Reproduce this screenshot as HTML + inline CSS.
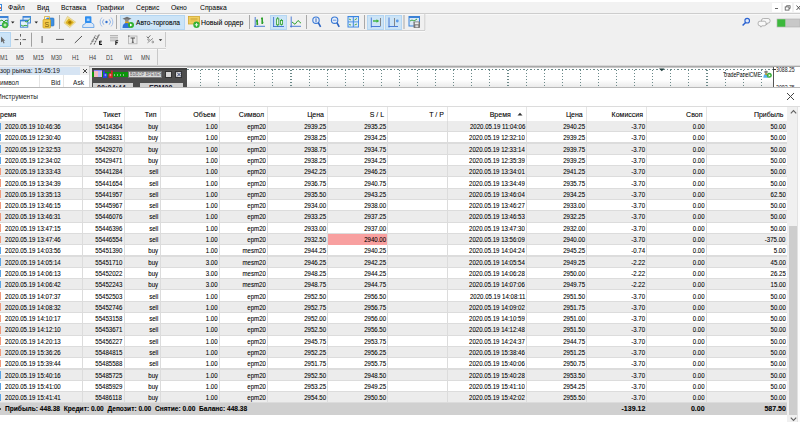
<!DOCTYPE html>
<html><head><meta charset="utf-8"><style>
*{margin:0;padding:0;box-sizing:border-box}
html,body{width:800px;height:422px;overflow:hidden;background:#f0f0f0;font-family:"Liberation Sans",sans-serif;color:#1a1a1a;position:relative}
div{position:absolute}
.t{white-space:nowrap;font-size:7.5px;line-height:10px}
/* menubar */
.menubar{left:0;top:0;width:800px;height:13.6px;background:#f2f2f2;border-bottom:1px solid #cdcdcd}
.mi{top:3px;font-size:8px;line-height:10px;color:#000;white-space:nowrap;transform:scaleX(0.85);transform-origin:0 0}
.sx{transform:scaleX(0.82);transform-origin:0 0}
.wbtn{top:3px;width:10px;height:10px;background:#fff}
/* toolbars */
.tsep{width:1px;background:#a0a0a0}
.hl{background:#cce4f7;border:1px solid #b4d6f2}
.tf{top:52.5px;font-size:7px;line-height:10px;color:#3a3a3a;white-space:nowrap;transform:scaleX(0.8);transform-origin:0 0}
/* terminal */
.term{left:0;top:87px;width:800px;height:335px;background:#fff;border-top:1.2px solid #b8b8b8}
.ht{top:108.8px;font-size:7px;line-height:12px;color:#000;white-space:nowrap;-webkit-text-stroke:0.15px rgba(0,0,0,0.6)}
.hsep{top:107px;width:1px;height:14px;background:#e5e5e5}
.row{left:0;width:787px;height:11.3px}
.rg{background:#ececec}
.rw{background:#ffffff}
.csep{top:121px;width:1px;height:282.5px;background:#dcdcdc}
.ic{left:0;width:1.2px;height:7.5px}
.ib{background:#5aa4e6}
.is{background:#f29a7c}
.c{height:11.3px;font-size:7.5px;line-height:11.3px;white-space:nowrap;color:#000;-webkit-text-stroke:0.15px rgba(0,0,0,0.6);transform:scaleX(0.81);transform-origin:0 0}
.cr{transform-origin:100% 0}
.cr{text-align:right}
.pink{left:328px;width:59.5px;height:11.25px;background:#f8a0a0}
.sum{left:0;width:787px;height:11.5px;background:#d0d0d0}
.sb{font-weight:bold;line-height:11.3px}
.sbl{transform:scaleX(0.88)}

.hl2{left:0;width:787px;height:1.2px;background:#dcdcdc}

</style></head><body>
<div class="menubar"></div>
<div style="left:0;top:0;width:800px;height:2px;background:#fff"></div>
<div style="left:-1px;top:3.8px;width:3px;height:7.7px;background:#fff;border:0.8px solid #3a8ae0"></div>
<div style="left:0;top:7.3px;width:1.2px;height:1.5px;background:#f07040"></div>
<div class="mi" style="left:8px">Файл</div>
<div class="mi" style="left:36.6px">Вид</div>
<div class="mi" style="left:61px">Вставка</div>
<div class="mi" style="left:97px">Графики</div>
<div class="mi" style="left:136px">Сервис</div>
<div class="mi" style="left:171px">Окно</div>
<div class="mi" style="left:199.8px">Справка</div>
<div class="wbtn" style="left:772px;width:9px;height:9px"></div>
<div class="wbtn" style="left:783px;width:9px;height:9px"></div>
<div class="wbtn" style="left:794px;width:9px;height:9px"></div>
<div style="left:774.6px;top:8.2px;width:3.4px;height:1.2px;background:#666"></div>
<svg style="position:absolute;left:784px;top:4.5px" width="8" height="6" viewBox="0 0 8 6"><path d="M2.6 1.8 V0.6 H6.2 V3.4 H5" fill="none" stroke="#555" stroke-width="0.7"/><rect x="1.2" y="1.9" width="3.8" height="3.2" fill="none" stroke="#555" stroke-width="0.8"/></svg>
<svg style="position:absolute;left:796px;top:4.5px" width="4" height="6" viewBox="0 0 4 6"><path d="M0.5 0.5 L4.5 5 M4.5 0.5 L0.5 5" stroke="#444" stroke-width="0.9"/></svg>
<!-- toolbar 1 -->
<div style="left:0;top:13.6px;width:800px;height:1px;background:#f8f8f8"></div>
<div class="hl" style="left:119.5px;top:15px;width:65px;height:14.5px"></div>
<div class="t" style="left:136px;top:18.2px;font-size:8px;color:#000;-webkit-text-stroke:0.15px rgba(0,0,0,0.5);transform:scaleX(0.83);transform-origin:0 0">Авто-торговла</div>
<div class="t" style="left:201.3px;top:18.2px;font-size:8px;color:#000;-webkit-text-stroke:0.15px rgba(0,0,0,0.5);transform:scaleX(0.86);transform-origin:0 0">Новый ордер</div>
<div class="hl" style="left:269.5px;top:15px;width:17.5px;height:14.5px"></div>
<div class="hl" style="left:367px;top:15px;width:17px;height:14.5px"></div>
<div class="hl" style="left:385.3px;top:15px;width:16.7px;height:14.5px"></div>
<div style="left:0;top:30px;width:425px;height:1px;background:#d0d0d0"></div>
<div style="left:0;top:31px;width:425px;height:1px;background:#fafafa"></div>
<!-- toolbar 2 -->
<div class="hl" style="left:-1px;top:32.2px;width:12px;height:14.5px"></div>
<div style="left:165px;top:32px;width:1px;height:15px;background:#c8c8c8"></div>
<div style="left:0;top:48px;width:166px;height:1px;background:#d0d0d0"></div>
<div style="left:0;top:49px;width:166px;height:1px;background:#fafafa"></div>
<div class="tf" style="left:0">M1</div>
<div class="tf" style="left:16px">M5</div>
<div class="tf" style="left:33px">M15</div>
<div class="tf" style="left:51px">M30</div>
<div class="tf" style="left:71.5px">H1</div>
<div class="tf" style="left:88.5px">H4</div>
<div class="tf" style="left:106px">D1</div>
<div class="tf" style="left:124px">W1</div>
<div class="tf" style="left:141px">MN</div>
<div style="left:157px;top:49px;width:1px;height:16px;background:#c8c8c8"></div>
<div style="left:0;top:65px;width:89px;height:1px;background:#d8d8d8"></div>
<!-- market watch -->
<div style="left:0;top:66.5px;width:80px;height:8px;background:#d6e4f3"></div>
<div class="t sx" style="left:0;top:65.5px;font-size:8px">зор рынка: 15:45:19</div>
<svg style="position:absolute;left:81.5px;top:67.8px" width="6" height="6" viewBox="0 0 6 6"><path d="M1 1 L5 5 M5 1 L1 5" stroke="#333" stroke-width="0.9"/></svg>
<div style="left:0;top:75px;width:88.5px;height:12.5px;background:#fff"></div>
<div class="t sx" style="left:0;top:78px;font-size:8px">имвол</div>
<div class="t sx" style="left:50.5px;top:78px;font-size:8px">Bid</div>
<div class="t sx" style="left:73px;top:78px;font-size:8px">Ask</div>
<div style="left:39.3px;top:75px;width:1px;height:12.5px;background:#e5e5e5"></div>
<div style="left:63px;top:75px;width:1px;height:12.5px;background:#e5e5e5"></div>
<div style="left:88.5px;top:66px;width:1px;height:22px;background:#d0d0d0"></div>
<!-- chart window -->
<div style="left:89px;top:64.8px;width:711px;height:1.2px;background:#d8d8d8"></div>
<div style="left:89px;top:65.8px;width:711px;height:1.4px;background:#a9a9a9"></div>
<div style="left:89.5px;top:67px;width:2px;height:21px;background:#e6e6e6"></div>
<div style="left:91.5px;top:67.5px;width:95.5px;height:20.5px;background:#4d4d4d"></div>
<div style="left:91.5px;top:67.5px;width:95.5px;height:2.5px;background:#3f3f3f"></div>
<div style="left:92px;top:71.8px;width:36px;height:5.6px;background:#0a960a"></div>
<div style="left:94px;top:70px;width:7.5px;height:7px;background:#f0b8c0"></div>
<div style="left:97.8px;top:70px;width:3.7px;height:7px;background:#b8b8f8"></div>
<div style="left:94px;top:70px;width:7.5px;height:1px;background:#8080f0"></div>
<svg style="position:absolute;left:102px;top:70px" width="12" height="8" viewBox="0 0 12 8"><path d="M1 0.5 h1.8 v2.5 h1 q1.6 0 1.6 1.8 v1.6 q0 1.6 -1.6 1.6 h-2.8z" fill="#2a3ae0"/><rect x="2.6" y="4" width="1.6" height="2.2" fill="#8c94f0"/><path d="M10.8 0.5 h-1.8 v2.5 h-1 q-1.6 0 -1.6 1.8 v1.6 q0 1.6 1.6 1.6 h2.8z" fill="#d02828"/><rect x="7.6" y="4" width="1.6" height="2.2" fill="#f09090"/></svg>
<div style="left:114px;top:73.5px;width:12px;height:2px;background:repeating-linear-gradient(90deg,#8ab88a 0 1px,transparent 1px 3px)"></div>
<div style="left:128px;top:71px;width:33.5px;height:7px;background:#dadada;border:1px solid #777"></div>
<div class="t" style="left:129.5px;top:70.5px;font-size:4.6px;line-height:8px;color:#606060;letter-spacing:0.35px;transform:scaleX(0.78);transform-origin:0 0">ВЫБОР ВРЕМЕНИ</div>
<div style="left:164.7px;top:71px;width:7.3px;height:7px;background:#d8d8d8;border:1px solid #333"></div>
<div style="left:174.8px;top:71px;width:7.7px;height:7px;background:#d8d8d8;border:1px solid #333"></div>
<svg style="position:absolute;left:175px;top:71px" width="8" height="7" viewBox="0 0 8 7"><path d="M2 1.5 L6 5.5 M6 1.5 L2 5.5" stroke="#3a4a7a" stroke-width="1"/></svg>
<div style="left:92.5px;top:82.5px;width:40.5px;height:5.5px;background:#d2d2d2"></div>
<div style="left:139.8px;top:82.5px;width:43px;height:5.5px;background:#d2d2d2"></div>
<div class="t" style="left:97.4px;top:83.3px;font-size:9px;line-height:10px;color:#223;font-weight:bold;transform:scaleX(0.8);transform-origin:0 0">00:04:44</div>
<div class="t" style="left:149px;top:83.3px;font-size:9px;line-height:10px;color:#223;font-weight:bold;transform:scaleX(0.8);transform-origin:0 0">EPM20</div>
<div style="left:187px;top:67.2px;width:586px;height:20.8px;background:linear-gradient(180deg,#fff 0,#fff 60%,#e8e8e8 100%)"></div>
<div style="left:187px;top:67.2px;width:613px;height:0.8px;background:#c8c8c8"></div>
<div style="left:187px;top:68.5px;width:586px;height:1.2px;background:repeating-linear-gradient(90deg,#6a8888 0 1.5px,transparent 1.5px 3.5px)"></div>
<div style="left:200.00px;top:69.5px;width:1.1px;height:18.5px;background:repeating-linear-gradient(180deg,#6a8888 0 1.3px,transparent 1.3px 3px)"></div><div style="left:218.09px;top:69.5px;width:1.1px;height:18.5px;background:repeating-linear-gradient(180deg,#6a8888 0 1.3px,transparent 1.3px 3px)"></div><div style="left:236.17px;top:69.5px;width:1.1px;height:18.5px;background:repeating-linear-gradient(180deg,#6a8888 0 1.3px,transparent 1.3px 3px)"></div><div style="left:254.26px;top:69.5px;width:1.1px;height:18.5px;background:repeating-linear-gradient(180deg,#6a8888 0 1.3px,transparent 1.3px 3px)"></div><div style="left:272.35px;top:69.5px;width:1.1px;height:18.5px;background:repeating-linear-gradient(180deg,#6a8888 0 1.3px,transparent 1.3px 3px)"></div><div style="left:290.44px;top:69.5px;width:1.1px;height:18.5px;background:repeating-linear-gradient(180deg,#6a8888 0 1.3px,transparent 1.3px 3px)"></div><div style="left:308.52px;top:69.5px;width:1.1px;height:18.5px;background:repeating-linear-gradient(180deg,#6a8888 0 1.3px,transparent 1.3px 3px)"></div><div style="left:326.61px;top:69.5px;width:1.1px;height:18.5px;background:repeating-linear-gradient(180deg,#6a8888 0 1.3px,transparent 1.3px 3px)"></div><div style="left:344.70px;top:69.5px;width:1.1px;height:18.5px;background:repeating-linear-gradient(180deg,#6a8888 0 1.3px,transparent 1.3px 3px)"></div><div style="left:362.78px;top:69.5px;width:1.1px;height:18.5px;background:repeating-linear-gradient(180deg,#6a8888 0 1.3px,transparent 1.3px 3px)"></div><div style="left:380.87px;top:69.5px;width:1.1px;height:18.5px;background:repeating-linear-gradient(180deg,#6a8888 0 1.3px,transparent 1.3px 3px)"></div><div style="left:398.96px;top:69.5px;width:1.1px;height:18.5px;background:repeating-linear-gradient(180deg,#6a8888 0 1.3px,transparent 1.3px 3px)"></div><div style="left:417.04px;top:69.5px;width:1.1px;height:18.5px;background:repeating-linear-gradient(180deg,#6a8888 0 1.3px,transparent 1.3px 3px)"></div><div style="left:435.13px;top:69.5px;width:1.1px;height:18.5px;background:repeating-linear-gradient(180deg,#6a8888 0 1.3px,transparent 1.3px 3px)"></div><div style="left:453.22px;top:69.5px;width:1.1px;height:18.5px;background:repeating-linear-gradient(180deg,#6a8888 0 1.3px,transparent 1.3px 3px)"></div><div style="left:471.31px;top:69.5px;width:1.1px;height:18.5px;background:repeating-linear-gradient(180deg,#6a8888 0 1.3px,transparent 1.3px 3px)"></div><div style="left:489.39px;top:69.5px;width:1.1px;height:18.5px;background:repeating-linear-gradient(180deg,#6a8888 0 1.3px,transparent 1.3px 3px)"></div><div style="left:507.48px;top:69.5px;width:1.1px;height:18.5px;background:repeating-linear-gradient(180deg,#6a8888 0 1.3px,transparent 1.3px 3px)"></div><div style="left:525.57px;top:69.5px;width:1.1px;height:18.5px;background:repeating-linear-gradient(180deg,#6a8888 0 1.3px,transparent 1.3px 3px)"></div><div style="left:543.65px;top:69.5px;width:1.1px;height:18.5px;background:repeating-linear-gradient(180deg,#6a8888 0 1.3px,transparent 1.3px 3px)"></div><div style="left:561.74px;top:69.5px;width:1.1px;height:18.5px;background:repeating-linear-gradient(180deg,#6a8888 0 1.3px,transparent 1.3px 3px)"></div><div style="left:579.83px;top:69.5px;width:1.1px;height:18.5px;background:repeating-linear-gradient(180deg,#6a8888 0 1.3px,transparent 1.3px 3px)"></div><div style="left:597.91px;top:69.5px;width:1.1px;height:18.5px;background:repeating-linear-gradient(180deg,#6a8888 0 1.3px,transparent 1.3px 3px)"></div><div style="left:616.00px;top:69.5px;width:1.1px;height:18.5px;background:repeating-linear-gradient(180deg,#6a8888 0 1.3px,transparent 1.3px 3px)"></div><div style="left:634.09px;top:69.5px;width:1.1px;height:18.5px;background:repeating-linear-gradient(180deg,#6a8888 0 1.3px,transparent 1.3px 3px)"></div><div style="left:652.17px;top:69.5px;width:1.1px;height:18.5px;background:repeating-linear-gradient(180deg,#6a8888 0 1.3px,transparent 1.3px 3px)"></div><div style="left:670.26px;top:69.5px;width:1.1px;height:18.5px;background:repeating-linear-gradient(180deg,#6a8888 0 1.3px,transparent 1.3px 3px)"></div><div style="left:688.35px;top:69.5px;width:1.1px;height:18.5px;background:repeating-linear-gradient(180deg,#6a8888 0 1.3px,transparent 1.3px 3px)"></div><div style="left:706.44px;top:69.5px;width:1.1px;height:18.5px;background:repeating-linear-gradient(180deg,#6a8888 0 1.3px,transparent 1.3px 3px)"></div><div style="left:724.52px;top:69.5px;width:1.1px;height:18.5px;background:repeating-linear-gradient(180deg,#6a8888 0 1.3px,transparent 1.3px 3px)"></div><div style="left:742.61px;top:69.5px;width:1.1px;height:18.5px;background:repeating-linear-gradient(180deg,#6a8888 0 1.3px,transparent 1.3px 3px)"></div><div style="left:760.70px;top:69.5px;width:1.1px;height:18.5px;background:repeating-linear-gradient(180deg,#6a8888 0 1.3px,transparent 1.3px 3px)"></div>
<svg style="position:absolute;left:658px;top:67.5px" width="8" height="4" viewBox="0 0 8 4"><path d="M1 0.5 H6.5 L3.8 3.3Z" fill="#1e3c3c"/></svg>
<div style="left:774px;top:67.2px;width:26px;height:20.8px;background:#fff"></div>
<div style="left:773px;top:67px;width:1px;height:21px;background:#555"></div>
<div style="left:773px;top:69px;width:3px;height:0.8px;background:#333"></div>
<div class="t" style="left:775.7px;top:64.8px;font-size:7px;transform:scaleX(0.74);transform-origin:0 0">3088.25</div>
<div class="t" style="left:775.7px;top:82.8px;font-size:7px;transform:scaleX(0.74);transform-origin:0 0">3082.75</div>
<div class="t" style="left:723.3px;top:69.5px;font-size:7px;color:#000;transform:scaleX(0.74);transform-origin:0 0">TradePanelCME</div>
<svg style="position:absolute;left:762px;top:68px" width="12" height="11" viewBox="0 0 12 11">
<path d="M1.8 4 L4 2.6 L6.4 4 L4 5z" fill="#6a6a6a"/>
<circle cx="4" cy="4.6" r="1.3" fill="#888"/>
<path d="M1.3 9.8 q0.2-4 2.8-4 q2.4 0 2.6 4z" fill="#5ab0ee"/>
<rect x="3.2" y="5.4" width="2" height="1.5" fill="#c89a20"/>
<circle cx="7.3" cy="7.3" r="2.5" fill="#3cb03c"/>
<path d="M6.7 5.9 L8.6 7.3 L6.7 8.7z" fill="#fff"/>
</svg>
<svg style="position:absolute;left:0;top:0" width="800" height="90" viewBox="0 0 800 90">
<!-- icon1: chart window + green circle -->
<rect x="-1" y="16.5" width="9" height="9" fill="#dbe9f8" stroke="#3b82d6" stroke-width="1"/>
<rect x="-1" y="16" width="9" height="2" fill="#3b82d6"/>
<polyline points="0,21 2,20 4,22 6,20 8,21" fill="none" stroke="#2ea02e" stroke-width="1"/>
<circle cx="5" cy="25" r="3.2" fill="#3cb33c"/>
<path d="M3.5 25 h3 M5 23.5 v3" stroke="#dff5df" stroke-width="1"/>
<path d="M11 21.5 h3.5 l-1.75 2z" fill="#222"/>
<!-- icon2: two windows -->
<rect x="23" y="16.5" width="7.5" height="6.5" fill="#dbe9f8" stroke="#3b82d6" stroke-width="0.9"/>
<rect x="23" y="16.2" width="7.5" height="1.5" fill="#3b82d6"/>
<rect x="20.4" y="20.2" width="7.4" height="7" fill="#e6f0fb" stroke="#3b82d6" stroke-width="0.9"/>
<rect x="20.4" y="19.9" width="7.4" height="1.5" fill="#3b82d6"/>
<polyline points="21,25 23,26.2 25,25.3 27.5,25.8" fill="none" stroke="#2ea02e" stroke-width="0.9"/>
<polyline points="25,21.5 27,22 30,18.5" fill="none" stroke="#2ea02e" stroke-width="0.9"/>
<path d="M34.5 21.5 h3.5 l-1.75 2z" fill="#222"/>
<!-- icon3: yellow S + blue square -->
<rect x="46.5" y="18" width="7.5" height="8" rx="1" fill="#3d8fe0" stroke="#2a6fc0" stroke-width="0.6"/>
<rect x="43" y="19.5" width="7.5" height="8.5" rx="0.8" fill="#f2c94a" stroke="#c9a020" stroke-width="0.7"/>
<path d="M44.5 16.5 h5 v3 h-5z" fill="none" stroke="#d8b030" stroke-width="0.8"/>
<text x="44.6" y="26.5" font-family="Liberation Sans" font-size="7" fill="#7a5a00">S</text>
<rect x="59" y="15" width="1" height="14" fill="#a8a8a8"/>
<!-- icon4: gold book -->
<path d="M67.5 16.3 L75.6 22.1 L69.7 27.6 L64.1 22.9 Z" fill="#f2e4a0" stroke="#d8c070" stroke-width="0.6"/>
<path d="M66.3 21.5 L68.8 18.5 L74 22.3 L70 26 L65.5 23Z" fill="#dcb020"/>
<circle cx="69.8" cy="22.3" r="1.6" fill="#a87a00"/>
<!-- icon5: blue tab on cloud -->
<path d="M82.6 27.5 q-0.6-3.5 2.4-3.6 q0.8-2.2 3.2-1.6 q2-1.6 3.8 0.8 q2.4 0.2 2 4.4z" fill="#dbe8f8" stroke="#5a9de6" stroke-width="0.8"/>
<rect x="85" y="16.2" width="6.4" height="6.8" rx="0.8" fill="#2f8ef0"/>
<rect x="86.8" y="18.5" width="2.8" height="2.5" fill="#9fd0ff"/>
<!-- icon6: radio -->
<circle cx="106.5" cy="22" r="1.2" fill="#2f6fd0"/>
<path d="M103.8 19.3 a3.8 3.8 0 0 0 0 5.4 M109.2 19.3 a3.8 3.8 0 0 1 0 5.4" fill="none" stroke="#6d9ee0" stroke-width="0.8"/>
<path d="M102 17.5 a6.3 6.3 0 0 0 0 9 M111 17.5 a6.3 6.3 0 0 1 0 9" fill="none" stroke="#8fb4ea" stroke-width="0.8"/>
<rect x="116" y="15" width="1" height="14" fill="#a8a8a8"/>
<!-- auto trading icon -->
<path d="M122.5 18.8 L127 16.8 L131.5 18.8 L127 20.5 Z" fill="#707070"/>
<circle cx="126.8" cy="20.5" r="1.8" fill="#8a8a8a"/>
<rect x="125" y="21.5" width="4" height="2.5" fill="#d8a020"/>
<path d="M122.5 28 q0-5 4-5 q3.5 0 3.5 5z" fill="#2f74d8"/>
<circle cx="131" cy="25" r="3" fill="#2fb02f"/>
<path d="M130 23.5 L132.5 25 L130 26.5Z" fill="#fff"/>
<!-- new order icon -->
<rect x="188.5" y="16.5" width="11" height="7.5" fill="#f0cf60" stroke="#d2a830" stroke-width="0.8"/>
<rect x="190.5" y="18.5" width="7" height="1" fill="#c8a030"/>
<rect x="190.5" y="20.5" width="6" height="0.8" fill="#e0b840"/>
<circle cx="196.5" cy="24.8" r="3.2" fill="#34b034"/>
<path d="M194.8 24.8 h3.4 M196.5 23.1 v3.4" stroke="#e8f8e8" stroke-width="1"/>
<rect x="249" y="15" width="1" height="14" fill="#a8a8a8"/>
<!-- bar chart -->
<path d="M255.2 17 v10 M254 26.3 h11" stroke="#3b6fd0" stroke-width="0.9"/>
<path d="M257.2 19.5 v5.5 M256 21 h1.2 M257.2 24 h1 M262.2 17.5 v6.5 M261 18.5 h1.2 M262.2 22.5 h1.2" stroke="#2ea02e" stroke-width="1.6"/>
<!-- candles -->
<path d="M273.6 17 v10 M273 26.5 h11" stroke="#3b6fd0" stroke-width="0.9"/>
<path d="M277.7 17 v9.5 M281.5 19 v6.5" stroke="#2ea02e" stroke-width="0.8"/>
<rect x="276.6" y="18.8" width="2.2" height="6" fill="#e8f6e8" stroke="#2ea02e" stroke-width="0.8"/>
<rect x="280.4" y="20.5" width="2.2" height="3.8" fill="#e8f6e8" stroke="#2ea02e" stroke-width="0.8"/>
<!-- line chart -->
<path d="M291.2 16.5 v11 M290 26.3 h11" stroke="#3b6fd0" stroke-width="0.9"/>
<polyline points="292,22 295,24.3 298,20.5 301,23.2" fill="none" stroke="#2ea02e" stroke-width="1"/>
<rect x="306" y="15" width="1" height="14" fill="#a8a8a8"/>
<!-- zoom in -->
<circle cx="316" cy="20.2" r="3.2" fill="#e8f0fb" stroke="#3a7ad6" stroke-width="1.1"/>
<path d="M316 18.3 v3.8" stroke="#2a5ab0" stroke-width="0.9"/>
<path d="M318.3 22.7 L320.6 26.8" stroke="#2a62c0" stroke-width="1.6"/>
<!-- zoom out -->
<circle cx="334.6" cy="20.2" r="3.2" fill="#e8f0fb" stroke="#3a7ad6" stroke-width="1.1"/>
<path d="M332.8 20.2 h3.6" stroke="#5a8ad6" stroke-width="0.9"/>
<path d="M336.9 22.7 L339.2 26.8" stroke="#2a62c0" stroke-width="1.6"/>
<!-- tile -->
<rect x="347.5" y="16" width="11.5" height="11.5" fill="#3a86e0"/>
<rect x="348.5" y="17.2" width="4.3" height="4.3" fill="#dbe9f8"/>
<rect x="353.8" y="17.2" width="4.3" height="4.3" fill="#dbe9f8"/>
<rect x="348.5" y="22.3" width="4.3" height="4.3" fill="#dbe9f8"/>
<rect x="353.8" y="22.3" width="4.3" height="4.3" fill="#dbe9f8"/>
<path d="M349 19 l2 1 M354.5 20 l2.5-1.5 M349 24.5 l2 0.5 M354.5 25 l2.5-1" stroke="#2ea02e" stroke-width="0.8"/>
<rect x="364" y="15" width="1" height="14" fill="#a8a8a8"/>
<!-- autoscroll -->
<path d="M371.3 17.5 v10 M371 26.5 h9.5" stroke="#3b6fd0" stroke-width="0.9"/>
<path d="M380.5 18 v8" stroke="#7a7a7a" stroke-width="0.9"/>
<path d="M373 21 h4" stroke="#3cb33c" stroke-width="1.4"/>
<path d="M376.5 19.2 L379.3 21 L376.5 22.8Z" fill="#3cb33c"/>
<!-- chart shift -->
<path d="M389 17.5 v10 M388.5 26.5 h9.5" stroke="#3b6fd0" stroke-width="0.9"/>
<path d="M394.5 18 v8" stroke="#7a7a7a" stroke-width="0.9"/>
<circle cx="397.3" cy="21" r="1.4" fill="#5a9ae6"/>
<rect x="403.5" y="15" width="1" height="14" fill="#a8a8a8"/>
<!-- template -->
<rect x="409" y="16.5" width="10.5" height="9.5" fill="#dbe9f8" stroke="#3b82d6" stroke-width="1"/>
<rect x="409" y="16" width="10.5" height="2" fill="#3b82d6"/>
<polyline points="410,21 412,20 414,21 417,19" fill="none" stroke="#2ea02e" stroke-width="0.9"/>
<rect x="413.5" y="21.5" width="6.5" height="6.5" rx="0.8" fill="#777"/>
<rect x="414.8" y="22.3" width="3.8" height="2" fill="#eee"/>
<rect x="415.3" y="25.3" width="3" height="2" fill="#ddd"/>
<rect x="424.3" y="13" width="1" height="17" fill="#d0d0d0"/>
<!-- right icons -->
<circle cx="747.2" cy="20.7" r="2.3" fill="#dfe9fb" stroke="#2a62d0" stroke-width="1.1"/>
<path d="M745.6 22.5 L742.6 25.6" stroke="#2a62d0" stroke-width="1.5"/>
<path d="M763.5 18.5 h4.5 q2 0 2 1.8 v1 q0 1.8 -2 1.8 h-0.5 l-0.8 1.6 l-0.8 -1.6 h-2.4 q-2 0 -2 -1.8 v-1 q0 -1.8 2 -1.8z" fill="#f6f6f6" stroke="#8a8a8a" stroke-width="0.6"/>
<path d="M760 21.2 h4.2 q1.9 0 1.9 1.8 v1 q0 1.8 -1.9 1.8 h-2.4 l-0.9 1.4 l-0.6 -1.4 h-0.3 q-1.9 0 -1.9 -1.8 v-1 q0 -1.8 1.9 -1.8z" fill="#f8f8f8" stroke="#8a8a8a" stroke-width="0.6"/>
<rect x="777" y="19" width="23" height="8" fill="#c8c8c8" stroke="#b0b0b0" stroke-width="0.6"/>
<rect x="777.3" y="19.3" width="8" height="7.4" fill="#3cb83c"/>
<!-- toolbar 2 -->
<path d="M1 36.5 L1 42.5 L2.5 41.2 L3.6 43.6 L4.6 43.1 L3.5 40.8 L5.2 40.8 Z" fill="#6a6a6a"/>
<path d="M20.5 34 v2.6 M20.5 42 v3 M14.5 39.6 h4 M22.5 39.6 h3.5" stroke="#505050" stroke-width="0.9"/>
<rect x="20.1" y="39.2" width="0.8" height="0.8" fill="#505050"/>
<rect x="31" y="32.7" width="1" height="14" fill="#a0a0a0"/>
<rect x="41.5" y="36" width="1.2" height="7" fill="#707070"/>
<path d="M56 39.4 h8" stroke="#555" stroke-width="1"/>
<path d="M74.8 43 L82 36" stroke="#555" stroke-width="1"/>
<path d="M90.5 44.5 L95.5 35.5 M94 44.5 L99.5 34.2" stroke="#6a6a6a" stroke-width="1.1" stroke-dasharray="1.8 0.6"/>
<path d="M91.5 41 h2.8 M94.8 38.5 h3 M96.5 36.2 h2.5" stroke="#7a7a7a" stroke-width="0.8"/>
<path d="M99.6 41 v3.8 M99.6 41.2 h2.2 M99.6 42.9 h1.8 M99.6 44.5 h2.4" stroke="#111" stroke-width="1"/>
<path d="M110 35.6 h8 M110 37.3 h8 M110 39 h8 M110 40.8 h5" stroke="#a8a8a8" stroke-width="0.9"/>
<path d="M115.8 40.5 v4.5 M115.8 40.8 h2.4 M115.8 42.6 h2" stroke="#222" stroke-width="1.1"/>
<rect x="128.6" y="36" width="8.4" height="7.8" fill="#ebebeb" stroke="#b0b0b0" stroke-width="0.8"/>
<rect x="128" y="35.5" width="1.5" height="1.2" fill="#777"/>
<path d="M130.6 38 h4.4 M132.8 38 v4.3 M131.8 42.3 h2" stroke="#444" stroke-width="0.9"/>
<path d="M146.8 36.5 l1.2 1.6 l2.4 -2.8" stroke="#555" stroke-width="0.8" fill="none"/>
<path d="M147.5 42.8 l5.5 -4.5" stroke="#666" stroke-width="0.7"/>
<circle cx="148.5" cy="39.6" r="0.8" fill="none" stroke="#666" stroke-width="0.6"/>
<circle cx="152.8" cy="42" r="0.9" fill="none" stroke="#666" stroke-width="0.6"/>
<path d="M158.8 39.3 h3.4 l-1.7 1.8z" fill="#222"/>
</svg>

<!-- terminal -->
<div class="term"></div>
<div class="t sx" style="left:-3.5px;top:92.3px;font-size:8px">Инструменты</div>
<svg style="position:absolute;left:786px;top:92px" width="9" height="9" viewBox="0 0 9 9"><path d="M1 1 L8 8 M8 1 L1 8" stroke="#444" stroke-width="1"/></svg>
<div style="left:0;top:105.6px;width:800px;height:1.6px;background:#dcdcdc"></div>
<div style="left:787px;top:107px;width:13px;height:315px;background:#f0f0f0"></div>
<div style="left:797.3px;top:107px;width:1px;height:315px;background:#e2e2e2"></div>
<div style="left:798.3px;top:107px;width:2px;height:315px;background:#fbfbfb"></div>
<div style="left:789px;top:225.5px;width:8px;height:189px;background:#cdcdcd"></div>
<svg style="position:absolute;left:789px;top:108px" width="9" height="8" viewBox="0 0 9 8"><path d="M1.8 5.3 L4.5 2.6 L7.2 5.3" fill="none" stroke="#606060" stroke-width="1.1"/></svg>
<svg style="position:absolute;left:789px;top:415px" width="9" height="8" viewBox="0 0 9 8"><path d="M1.8 2.7 L4.5 5.4 L7.2 2.7" fill="none" stroke="#606060" stroke-width="1.1"/></svg>

<div class="ht" style="left:0px">ремя</div><div class="ht hr" style="right:679.0px">Тикет</div><div class="ht hr" style="right:643.5px">Тип</div><div class="ht hr" style="right:584.5px">Объем</div><div class="ht hr" style="right:535.9px">Символ</div><div class="ht hr" style="right:476.0px">Цена</div><div class="ht hr" style="right:415.9px">S / L</div><div class="ht hr" style="right:356.1px">T / P</div><div class="ht hr" style="right:289.25px">Время</div><svg style="position:absolute;left:517px;top:112px" width="6" height="4" viewBox="0 0 6 4"><path d="M0.5 3.5 L3 0.8 L5.5 3.5Z" fill="#333"/></svg><div class="ht hr" style="right:217.25px">Цена</div><div class="ht hr" style="right:157.0px">Комиссия</div><div class="ht hr" style="right:97.5px">Своп</div><div class="ht hr" style="right:16.5px">Прибыль</div><div class="hsep" style="left:82.0px"></div><div class="hsep" style="left:124.0px"></div><div class="hsep" style="left:159.5px"></div><div class="hsep" style="left:218.5px"></div><div class="hsep" style="left:267.1px"></div><div class="hsep" style="left:327.0px"></div><div class="hsep" style="left:387.1px"></div><div class="hsep" style="left:446.9px"></div><div class="hsep" style="left:525.75px"></div><div class="hsep" style="left:585.75px"></div><div class="hsep" style="left:646.0px"></div><div class="hsep" style="left:705.5px"></div><div class="row rg" style="top:121.0px"></div><div class="hl2" style="top:131.10px"></div><div class="ic ib" style="top:122.6px"></div><div class="c cd" style="left:4.5px;top:121.0px">2020.05.19 10:46:36</div><div class="c cr" style="right:678.0px;top:121.0px">55414364</div><div class="c cr" style="right:641.5px;top:121.0px">buy</div><div class="c cr" style="right:582.3px;top:121.0px">1.00</div><div class="c cr" style="right:533.9px;top:121.0px">epm20</div><div class="c cr" style="right:473.8px;top:121.0px">2939.25</div><div class="c cr" style="right:413.9px;top:121.0px">2935.25</div><div class="c cr cd" style="right:275.05px;top:121.0px">2020.05.19 11:04:06</div><div class="c cr" style="right:215.05px;top:121.0px">2940.25</div><div class="c cr" style="right:155.0px;top:121.0px">-3.70</div><div class="c cr" style="right:95.5px;top:121.0px">0.00</div><div class="c cr" style="right:14.5px;top:121.0px">50.00</div><div class="row rw" style="top:132.3px"></div><div class="hl2" style="top:142.40px"></div><div class="ic ib" style="top:133.9px"></div><div class="c cd" style="left:4.5px;top:132.3px">2020.05.19 12:30:40</div><div class="c cr" style="right:678.0px;top:132.3px">55428831</div><div class="c cr" style="right:641.5px;top:132.3px">buy</div><div class="c cr" style="right:582.3px;top:132.3px">1.00</div><div class="c cr" style="right:533.9px;top:132.3px">epm20</div><div class="c cr" style="right:473.8px;top:132.3px">2938.25</div><div class="c cr" style="right:413.9px;top:132.3px">2934.25</div><div class="c cr cd" style="right:275.05px;top:132.3px">2020.05.19 12:32:10</div><div class="c cr" style="right:215.05px;top:132.3px">2939.25</div><div class="c cr" style="right:155.0px;top:132.3px">-3.70</div><div class="c cr" style="right:95.5px;top:132.3px">0.00</div><div class="c cr" style="right:14.5px;top:132.3px">50.00</div><div class="row rg" style="top:143.6px"></div><div class="hl2" style="top:153.70px"></div><div class="ic ib" style="top:145.2px"></div><div class="c cd" style="left:4.5px;top:143.6px">2020.05.19 12:32:53</div><div class="c cr" style="right:678.0px;top:143.6px">55429270</div><div class="c cr" style="right:641.5px;top:143.6px">buy</div><div class="c cr" style="right:582.3px;top:143.6px">1.00</div><div class="c cr" style="right:533.9px;top:143.6px">epm20</div><div class="c cr" style="right:473.8px;top:143.6px">2938.75</div><div class="c cr" style="right:413.9px;top:143.6px">2934.75</div><div class="c cr cd" style="right:275.05px;top:143.6px">2020.05.19 12:33:14</div><div class="c cr" style="right:215.05px;top:143.6px">2939.75</div><div class="c cr" style="right:155.0px;top:143.6px">-3.70</div><div class="c cr" style="right:95.5px;top:143.6px">0.00</div><div class="c cr" style="right:14.5px;top:143.6px">50.00</div><div class="row rw" style="top:154.9px"></div><div class="hl2" style="top:165.00px"></div><div class="ic ib" style="top:156.5px"></div><div class="c cd" style="left:4.5px;top:154.9px">2020.05.19 12:34:02</div><div class="c cr" style="right:678.0px;top:154.9px">55429471</div><div class="c cr" style="right:641.5px;top:154.9px">buy</div><div class="c cr" style="right:582.3px;top:154.9px">1.00</div><div class="c cr" style="right:533.9px;top:154.9px">epm20</div><div class="c cr" style="right:473.8px;top:154.9px">2938.25</div><div class="c cr" style="right:413.9px;top:154.9px">2934.25</div><div class="c cr cd" style="right:275.05px;top:154.9px">2020.05.19 12:35:39</div><div class="c cr" style="right:215.05px;top:154.9px">2939.25</div><div class="c cr" style="right:155.0px;top:154.9px">-3.70</div><div class="c cr" style="right:95.5px;top:154.9px">0.00</div><div class="c cr" style="right:14.5px;top:154.9px">50.00</div><div class="row rg" style="top:166.2px"></div><div class="hl2" style="top:176.30px"></div><div class="ic is" style="top:167.79999999999998px"></div><div class="c cd" style="left:4.5px;top:166.2px">2020.05.19 13:33:43</div><div class="c cr" style="right:678.0px;top:166.2px">55441284</div><div class="c cr" style="right:641.5px;top:166.2px">sell</div><div class="c cr" style="right:582.3px;top:166.2px">1.00</div><div class="c cr" style="right:533.9px;top:166.2px">epm20</div><div class="c cr" style="right:473.8px;top:166.2px">2942.25</div><div class="c cr" style="right:413.9px;top:166.2px">2946.25</div><div class="c cr cd" style="right:275.05px;top:166.2px">2020.05.19 13:34:01</div><div class="c cr" style="right:215.05px;top:166.2px">2941.25</div><div class="c cr" style="right:155.0px;top:166.2px">-3.70</div><div class="c cr" style="right:95.5px;top:166.2px">0.00</div><div class="c cr" style="right:14.5px;top:166.2px">50.00</div><div class="row rw" style="top:177.5px"></div><div class="hl2" style="top:187.60px"></div><div class="ic is" style="top:179.1px"></div><div class="c cd" style="left:4.5px;top:177.5px">2020.05.19 13:34:39</div><div class="c cr" style="right:678.0px;top:177.5px">55441654</div><div class="c cr" style="right:641.5px;top:177.5px">sell</div><div class="c cr" style="right:582.3px;top:177.5px">1.00</div><div class="c cr" style="right:533.9px;top:177.5px">epm20</div><div class="c cr" style="right:473.8px;top:177.5px">2936.75</div><div class="c cr" style="right:413.9px;top:177.5px">2940.75</div><div class="c cr cd" style="right:275.05px;top:177.5px">2020.05.19 13:34:49</div><div class="c cr" style="right:215.05px;top:177.5px">2935.75</div><div class="c cr" style="right:155.0px;top:177.5px">-3.70</div><div class="c cr" style="right:95.5px;top:177.5px">0.00</div><div class="c cr" style="right:14.5px;top:177.5px">50.00</div><div class="row rg" style="top:188.8px"></div><div class="hl2" style="top:198.90px"></div><div class="ic is" style="top:190.4px"></div><div class="c cd" style="left:4.5px;top:188.8px">2020.05.19 13:35:13</div><div class="c cr" style="right:678.0px;top:188.8px">55441957</div><div class="c cr" style="right:641.5px;top:188.8px">sell</div><div class="c cr" style="right:582.3px;top:188.8px">1.00</div><div class="c cr" style="right:533.9px;top:188.8px">epm20</div><div class="c cr" style="right:473.8px;top:188.8px">2935.50</div><div class="c cr" style="right:413.9px;top:188.8px">2943.25</div><div class="c cr cd" style="right:275.05px;top:188.8px">2020.05.19 13:46:04</div><div class="c cr" style="right:215.05px;top:188.8px">2934.25</div><div class="c cr" style="right:155.0px;top:188.8px">-3.70</div><div class="c cr" style="right:95.5px;top:188.8px">0.00</div><div class="c cr" style="right:14.5px;top:188.8px">62.50</div><div class="row rw" style="top:200.10000000000002px"></div><div class="hl2" style="top:210.20px"></div><div class="ic is" style="top:201.70000000000002px"></div><div class="c cd" style="left:4.5px;top:200.10000000000002px">2020.05.19 13:46:15</div><div class="c cr" style="right:678.0px;top:200.10000000000002px">55445967</div><div class="c cr" style="right:641.5px;top:200.10000000000002px">sell</div><div class="c cr" style="right:582.3px;top:200.10000000000002px">1.00</div><div class="c cr" style="right:533.9px;top:200.10000000000002px">epm20</div><div class="c cr" style="right:473.8px;top:200.10000000000002px">2934.00</div><div class="c cr" style="right:413.9px;top:200.10000000000002px">2938.00</div><div class="c cr cd" style="right:275.05px;top:200.10000000000002px">2020.05.19 13:46:27</div><div class="c cr" style="right:215.05px;top:200.10000000000002px">2933.00</div><div class="c cr" style="right:155.0px;top:200.10000000000002px">-3.70</div><div class="c cr" style="right:95.5px;top:200.10000000000002px">0.00</div><div class="c cr" style="right:14.5px;top:200.10000000000002px">50.00</div><div class="row rg" style="top:211.4px"></div><div class="hl2" style="top:221.50px"></div><div class="ic is" style="top:213.0px"></div><div class="c cd" style="left:4.5px;top:211.4px">2020.05.19 13:46:31</div><div class="c cr" style="right:678.0px;top:211.4px">55446076</div><div class="c cr" style="right:641.5px;top:211.4px">sell</div><div class="c cr" style="right:582.3px;top:211.4px">1.00</div><div class="c cr" style="right:533.9px;top:211.4px">epm20</div><div class="c cr" style="right:473.8px;top:211.4px">2933.25</div><div class="c cr" style="right:413.9px;top:211.4px">2937.25</div><div class="c cr cd" style="right:275.05px;top:211.4px">2020.05.19 13:46:53</div><div class="c cr" style="right:215.05px;top:211.4px">2932.25</div><div class="c cr" style="right:155.0px;top:211.4px">-3.70</div><div class="c cr" style="right:95.5px;top:211.4px">0.00</div><div class="c cr" style="right:14.5px;top:211.4px">50.00</div><div class="row rw" style="top:222.7px"></div><div class="hl2" style="top:232.80px"></div><div class="ic is" style="top:224.29999999999998px"></div><div class="c cd" style="left:4.5px;top:222.7px">2020.05.19 13:47:15</div><div class="c cr" style="right:678.0px;top:222.7px">55446396</div><div class="c cr" style="right:641.5px;top:222.7px">sell</div><div class="c cr" style="right:582.3px;top:222.7px">1.00</div><div class="c cr" style="right:533.9px;top:222.7px">epm20</div><div class="c cr" style="right:473.8px;top:222.7px">2933.00</div><div class="c cr" style="right:413.9px;top:222.7px">2937.00</div><div class="c cr cd" style="right:275.05px;top:222.7px">2020.05.19 13:47:30</div><div class="c cr" style="right:215.05px;top:222.7px">2932.00</div><div class="c cr" style="right:155.0px;top:222.7px">-3.70</div><div class="c cr" style="right:95.5px;top:222.7px">0.00</div><div class="c cr" style="right:14.5px;top:222.7px">50.00</div><div class="row rg" style="top:234.0px"></div><div class="hl2" style="top:244.10px"></div><div class="ic is" style="top:235.6px"></div><div class="c cd" style="left:4.5px;top:234.0px">2020.05.19 13:47:46</div><div class="c cr" style="right:678.0px;top:234.0px">55446554</div><div class="c cr" style="right:641.5px;top:234.0px">sell</div><div class="c cr" style="right:582.3px;top:234.0px">1.00</div><div class="c cr" style="right:533.9px;top:234.0px">epm20</div><div class="c cr" style="right:473.8px;top:234.0px">2932.50</div><div class="c cr" style="right:413.9px;top:234.0px">2940.00</div><div class="c cr cd" style="right:275.05px;top:234.0px">2020.05.19 13:56:09</div><div class="c cr" style="right:215.05px;top:234.0px">2940.00</div><div class="c cr" style="right:155.0px;top:234.0px">-3.70</div><div class="c cr" style="right:95.5px;top:234.0px">0.00</div><div class="c cr" style="right:14.5px;top:234.0px">-375.00</div><div class="pink" style="top:234.0px"></div><div class="c cr" style="right:413.9px;top:234.0px">2940.00</div><div class="row rw" style="top:245.3px"></div><div class="hl2" style="top:255.40px"></div><div class="ic ib" style="top:246.9px"></div><div class="c cd" style="left:4.5px;top:245.3px">2020.05.19 14:03:56</div><div class="c cr" style="right:678.0px;top:245.3px">55451390</div><div class="c cr" style="right:641.5px;top:245.3px">buy</div><div class="c cr" style="right:582.3px;top:245.3px">1.00</div><div class="c cr" style="right:533.9px;top:245.3px">mesm20</div><div class="c cr" style="right:473.8px;top:245.3px">2944.25</div><div class="c cr" style="right:413.9px;top:245.3px">2940.25</div><div class="c cr cd" style="right:275.05px;top:245.3px">2020.05.19 14:04:24</div><div class="c cr" style="right:215.05px;top:245.3px">2945.25</div><div class="c cr" style="right:155.0px;top:245.3px">-0.74</div><div class="c cr" style="right:95.5px;top:245.3px">0.00</div><div class="c cr" style="right:14.5px;top:245.3px">5.00</div><div class="row rg" style="top:256.6px"></div><div class="hl2" style="top:266.70px"></div><div class="ic ib" style="top:258.20000000000005px"></div><div class="c cd" style="left:4.5px;top:256.6px">2020.05.19 14:05:14</div><div class="c cr" style="right:678.0px;top:256.6px">55451710</div><div class="c cr" style="right:641.5px;top:256.6px">buy</div><div class="c cr" style="right:582.3px;top:256.6px">3.00</div><div class="c cr" style="right:533.9px;top:256.6px">mesm20</div><div class="c cr" style="right:473.8px;top:256.6px">2946.25</div><div class="c cr" style="right:413.9px;top:256.6px">2942.25</div><div class="c cr cd" style="right:275.05px;top:256.6px">2020.05.19 14:05:54</div><div class="c cr" style="right:215.05px;top:256.6px">2949.25</div><div class="c cr" style="right:155.0px;top:256.6px">-2.22</div><div class="c cr" style="right:95.5px;top:256.6px">0.00</div><div class="c cr" style="right:14.5px;top:256.6px">45.00</div><div class="row rw" style="top:267.9px"></div><div class="hl2" style="top:278.00px"></div><div class="ic ib" style="top:269.5px"></div><div class="c cd" style="left:4.5px;top:267.9px">2020.05.19 14:06:13</div><div class="c cr" style="right:678.0px;top:267.9px">55452022</div><div class="c cr" style="right:641.5px;top:267.9px">buy</div><div class="c cr" style="right:582.3px;top:267.9px">3.00</div><div class="c cr" style="right:533.9px;top:267.9px">mesm20</div><div class="c cr" style="right:473.8px;top:267.9px">2948.25</div><div class="c cr" style="right:413.9px;top:267.9px">2944.25</div><div class="c cr cd" style="right:275.05px;top:267.9px">2020.05.19 14:06:28</div><div class="c cr" style="right:215.05px;top:267.9px">2950.00</div><div class="c cr" style="right:155.0px;top:267.9px">-2.22</div><div class="c cr" style="right:95.5px;top:267.9px">0.00</div><div class="c cr" style="right:14.5px;top:267.9px">26.25</div><div class="row rg" style="top:279.20000000000005px"></div><div class="hl2" style="top:289.30px"></div><div class="ic ib" style="top:280.80000000000007px"></div><div class="c cd" style="left:4.5px;top:279.20000000000005px">2020.05.19 14:06:42</div><div class="c cr" style="right:678.0px;top:279.20000000000005px">55452243</div><div class="c cr" style="right:641.5px;top:279.20000000000005px">buy</div><div class="c cr" style="right:582.3px;top:279.20000000000005px">3.00</div><div class="c cr" style="right:533.9px;top:279.20000000000005px">mesm20</div><div class="c cr" style="right:473.8px;top:279.20000000000005px">2948.75</div><div class="c cr" style="right:413.9px;top:279.20000000000005px">2944.75</div><div class="c cr cd" style="right:275.05px;top:279.20000000000005px">2020.05.19 14:07:06</div><div class="c cr" style="right:215.05px;top:279.20000000000005px">2949.75</div><div class="c cr" style="right:155.0px;top:279.20000000000005px">-2.22</div><div class="c cr" style="right:95.5px;top:279.20000000000005px">0.00</div><div class="c cr" style="right:14.5px;top:279.20000000000005px">15.00</div><div class="row rw" style="top:290.5px"></div><div class="hl2" style="top:300.60px"></div><div class="ic is" style="top:292.1px"></div><div class="c cd" style="left:4.5px;top:290.5px">2020.05.19 14:07:37</div><div class="c cr" style="right:678.0px;top:290.5px">55452503</div><div class="c cr" style="right:641.5px;top:290.5px">sell</div><div class="c cr" style="right:582.3px;top:290.5px">1.00</div><div class="c cr" style="right:533.9px;top:290.5px">epm20</div><div class="c cr" style="right:473.8px;top:290.5px">2952.50</div><div class="c cr" style="right:413.9px;top:290.5px">2956.50</div><div class="c cr cd" style="right:275.05px;top:290.5px">2020.05.19 14:08:11</div><div class="c cr" style="right:215.05px;top:290.5px">2951.50</div><div class="c cr" style="right:155.0px;top:290.5px">-3.70</div><div class="c cr" style="right:95.5px;top:290.5px">0.00</div><div class="c cr" style="right:14.5px;top:290.5px">50.00</div><div class="row rg" style="top:301.8px"></div><div class="hl2" style="top:311.90px"></div><div class="ic is" style="top:303.40000000000003px"></div><div class="c cd" style="left:4.5px;top:301.8px">2020.05.19 14:08:32</div><div class="c cr" style="right:678.0px;top:301.8px">55452746</div><div class="c cr" style="right:641.5px;top:301.8px">sell</div><div class="c cr" style="right:582.3px;top:301.8px">1.00</div><div class="c cr" style="right:533.9px;top:301.8px">epm20</div><div class="c cr" style="right:473.8px;top:301.8px">2952.75</div><div class="c cr" style="right:413.9px;top:301.8px">2956.75</div><div class="c cr cd" style="right:275.05px;top:301.8px">2020.05.19 14:09:02</div><div class="c cr" style="right:215.05px;top:301.8px">2951.75</div><div class="c cr" style="right:155.0px;top:301.8px">-3.70</div><div class="c cr" style="right:95.5px;top:301.8px">0.00</div><div class="c cr" style="right:14.5px;top:301.8px">50.00</div><div class="row rw" style="top:313.1px"></div><div class="hl2" style="top:323.20px"></div><div class="ic is" style="top:314.70000000000005px"></div><div class="c cd" style="left:4.5px;top:313.1px">2020.05.19 14:10:17</div><div class="c cr" style="right:678.0px;top:313.1px">55453158</div><div class="c cr" style="right:641.5px;top:313.1px">sell</div><div class="c cr" style="right:582.3px;top:313.1px">1.00</div><div class="c cr" style="right:533.9px;top:313.1px">epm20</div><div class="c cr" style="right:473.8px;top:313.1px">2952.00</div><div class="c cr" style="right:413.9px;top:313.1px">2956.00</div><div class="c cr cd" style="right:275.05px;top:313.1px">2020.05.19 14:10:59</div><div class="c cr" style="right:215.05px;top:313.1px">2951.00</div><div class="c cr" style="right:155.0px;top:313.1px">-3.70</div><div class="c cr" style="right:95.5px;top:313.1px">0.00</div><div class="c cr" style="right:14.5px;top:313.1px">50.00</div><div class="row rg" style="top:324.4px"></div><div class="hl2" style="top:334.50px"></div><div class="ic is" style="top:326.0px"></div><div class="c cd" style="left:4.5px;top:324.4px">2020.05.19 14:12:10</div><div class="c cr" style="right:678.0px;top:324.4px">55453671</div><div class="c cr" style="right:641.5px;top:324.4px">sell</div><div class="c cr" style="right:582.3px;top:324.4px">1.00</div><div class="c cr" style="right:533.9px;top:324.4px">epm20</div><div class="c cr" style="right:473.8px;top:324.4px">2952.50</div><div class="c cr" style="right:413.9px;top:324.4px">2956.50</div><div class="c cr cd" style="right:275.05px;top:324.4px">2020.05.19 14:12:48</div><div class="c cr" style="right:215.05px;top:324.4px">2951.50</div><div class="c cr" style="right:155.0px;top:324.4px">-3.70</div><div class="c cr" style="right:95.5px;top:324.4px">0.00</div><div class="c cr" style="right:14.5px;top:324.4px">50.00</div><div class="row rw" style="top:335.70000000000005px"></div><div class="hl2" style="top:345.80px"></div><div class="ic is" style="top:337.30000000000007px"></div><div class="c cd" style="left:4.5px;top:335.70000000000005px">2020.05.19 14:20:13</div><div class="c cr" style="right:678.0px;top:335.70000000000005px">55456227</div><div class="c cr" style="right:641.5px;top:335.70000000000005px">sell</div><div class="c cr" style="right:582.3px;top:335.70000000000005px">1.00</div><div class="c cr" style="right:533.9px;top:335.70000000000005px">epm20</div><div class="c cr" style="right:473.8px;top:335.70000000000005px">2945.75</div><div class="c cr" style="right:413.9px;top:335.70000000000005px">2953.75</div><div class="c cr cd" style="right:275.05px;top:335.70000000000005px">2020.05.19 14:24:37</div><div class="c cr" style="right:215.05px;top:335.70000000000005px">2944.75</div><div class="c cr" style="right:155.0px;top:335.70000000000005px">-3.70</div><div class="c cr" style="right:95.5px;top:335.70000000000005px">0.00</div><div class="c cr" style="right:14.5px;top:335.70000000000005px">50.00</div><div class="row rg" style="top:347.0px"></div><div class="hl2" style="top:357.10px"></div><div class="ic is" style="top:348.6px"></div><div class="c cd" style="left:4.5px;top:347.0px">2020.05.19 15:36:26</div><div class="c cr" style="right:678.0px;top:347.0px">55484815</div><div class="c cr" style="right:641.5px;top:347.0px">sell</div><div class="c cr" style="right:582.3px;top:347.0px">1.00</div><div class="c cr" style="right:533.9px;top:347.0px">epm20</div><div class="c cr" style="right:473.8px;top:347.0px">2952.25</div><div class="c cr" style="right:413.9px;top:347.0px">2956.25</div><div class="c cr cd" style="right:275.05px;top:347.0px">2020.05.19 15:38:46</div><div class="c cr" style="right:215.05px;top:347.0px">2951.25</div><div class="c cr" style="right:155.0px;top:347.0px">-3.70</div><div class="c cr" style="right:95.5px;top:347.0px">0.00</div><div class="c cr" style="right:14.5px;top:347.0px">50.00</div><div class="row rw" style="top:358.3px"></div><div class="hl2" style="top:368.40px"></div><div class="ic is" style="top:359.90000000000003px"></div><div class="c cd" style="left:4.5px;top:358.3px">2020.05.19 15:39:44</div><div class="c cr" style="right:678.0px;top:358.3px">55485588</div><div class="c cr" style="right:641.5px;top:358.3px">sell</div><div class="c cr" style="right:582.3px;top:358.3px">1.00</div><div class="c cr" style="right:533.9px;top:358.3px">epm20</div><div class="c cr" style="right:473.8px;top:358.3px">2951.75</div><div class="c cr" style="right:413.9px;top:358.3px">2955.75</div><div class="c cr cd" style="right:275.05px;top:358.3px">2020.05.19 15:40:06</div><div class="c cr" style="right:215.05px;top:358.3px">2950.75</div><div class="c cr" style="right:155.0px;top:358.3px">-3.70</div><div class="c cr" style="right:95.5px;top:358.3px">0.00</div><div class="c cr" style="right:14.5px;top:358.3px">50.00</div><div class="row rg" style="top:369.6px"></div><div class="hl2" style="top:379.70px"></div><div class="ic ib" style="top:371.20000000000005px"></div><div class="c cd" style="left:4.5px;top:369.6px">2020.05.19 15:40:16</div><div class="c cr" style="right:678.0px;top:369.6px">55485725</div><div class="c cr" style="right:641.5px;top:369.6px">buy</div><div class="c cr" style="right:582.3px;top:369.6px">1.00</div><div class="c cr" style="right:533.9px;top:369.6px">epm20</div><div class="c cr" style="right:473.8px;top:369.6px">2952.50</div><div class="c cr" style="right:413.9px;top:369.6px">2948.50</div><div class="c cr cd" style="right:275.05px;top:369.6px">2020.05.19 15:40:28</div><div class="c cr" style="right:215.05px;top:369.6px">2953.50</div><div class="c cr" style="right:155.0px;top:369.6px">-3.70</div><div class="c cr" style="right:95.5px;top:369.6px">0.00</div><div class="c cr" style="right:14.5px;top:369.6px">50.00</div><div class="row rw" style="top:380.90000000000003px"></div><div class="hl2" style="top:391.00px"></div><div class="ic ib" style="top:382.50000000000006px"></div><div class="c cd" style="left:4.5px;top:380.90000000000003px">2020.05.19 15:41:00</div><div class="c cr" style="right:678.0px;top:380.90000000000003px">55485929</div><div class="c cr" style="right:641.5px;top:380.90000000000003px">buy</div><div class="c cr" style="right:582.3px;top:380.90000000000003px">1.00</div><div class="c cr" style="right:533.9px;top:380.90000000000003px">epm20</div><div class="c cr" style="right:473.8px;top:380.90000000000003px">2953.25</div><div class="c cr" style="right:413.9px;top:380.90000000000003px">2949.25</div><div class="c cr cd" style="right:275.05px;top:380.90000000000003px">2020.05.19 15:41:10</div><div class="c cr" style="right:215.05px;top:380.90000000000003px">2954.25</div><div class="c cr" style="right:155.0px;top:380.90000000000003px">-3.70</div><div class="c cr" style="right:95.5px;top:380.90000000000003px">0.00</div><div class="c cr" style="right:14.5px;top:380.90000000000003px">50.00</div><div class="row rg" style="top:392.20000000000005px"></div><div class="hl2" style="top:402.30px"></div><div class="ic ib" style="top:393.80000000000007px"></div><div class="c cd" style="left:4.5px;top:392.20000000000005px">2020.05.19 15:41:41</div><div class="c cr" style="right:678.0px;top:392.20000000000005px">55486118</div><div class="c cr" style="right:641.5px;top:392.20000000000005px">buy</div><div class="c cr" style="right:582.3px;top:392.20000000000005px">1.00</div><div class="c cr" style="right:533.9px;top:392.20000000000005px">epm20</div><div class="c cr" style="right:473.8px;top:392.20000000000005px">2954.50</div><div class="c cr" style="right:413.9px;top:392.20000000000005px">2950.50</div><div class="c cr cd" style="right:275.05px;top:392.20000000000005px">2020.05.19 15:42:02</div><div class="c cr" style="right:215.05px;top:392.20000000000005px">2955.50</div><div class="c cr" style="right:155.0px;top:392.20000000000005px">-3.70</div><div class="c cr" style="right:95.5px;top:392.20000000000005px">0.00</div><div class="c cr" style="right:14.5px;top:392.20000000000005px">50.00</div><div class="csep" style="left:82.0px"></div><div class="csep" style="left:124.0px"></div><div class="csep" style="left:159.5px"></div><div class="csep" style="left:218.5px"></div><div class="csep" style="left:267.1px"></div><div class="csep" style="left:327.0px"></div><div class="csep" style="left:387.1px"></div><div class="csep" style="left:446.9px"></div><div class="csep" style="left:525.75px"></div><div class="csep" style="left:585.75px"></div><div class="csep" style="left:646.0px"></div><div class="csep" style="left:705.5px"></div><div class="sum" style="top:403.3px"></div><div style="left:0;top:408.1px;width:1px;height:2px;background:#555"></div><div class="c sb sbl" style="left:4.5px;top:403.3px">Прибыль: 448.38&nbsp; Кредит: 0.00&nbsp; Депозит: 0.00&nbsp; Снятие: 0.00&nbsp; Баланс: 448.38</div><div class="c cr sb" style="right:155.0px;top:403.3px;transform:scaleX(0.94)">-139.12</div><div class="c cr sb" style="right:95.5px;top:403.3px;transform:scaleX(0.94)">0.00</div><div class="c cr sb" style="right:14.5px;top:403.3px;transform:scaleX(0.94)">587.50</div>
</body></html>
